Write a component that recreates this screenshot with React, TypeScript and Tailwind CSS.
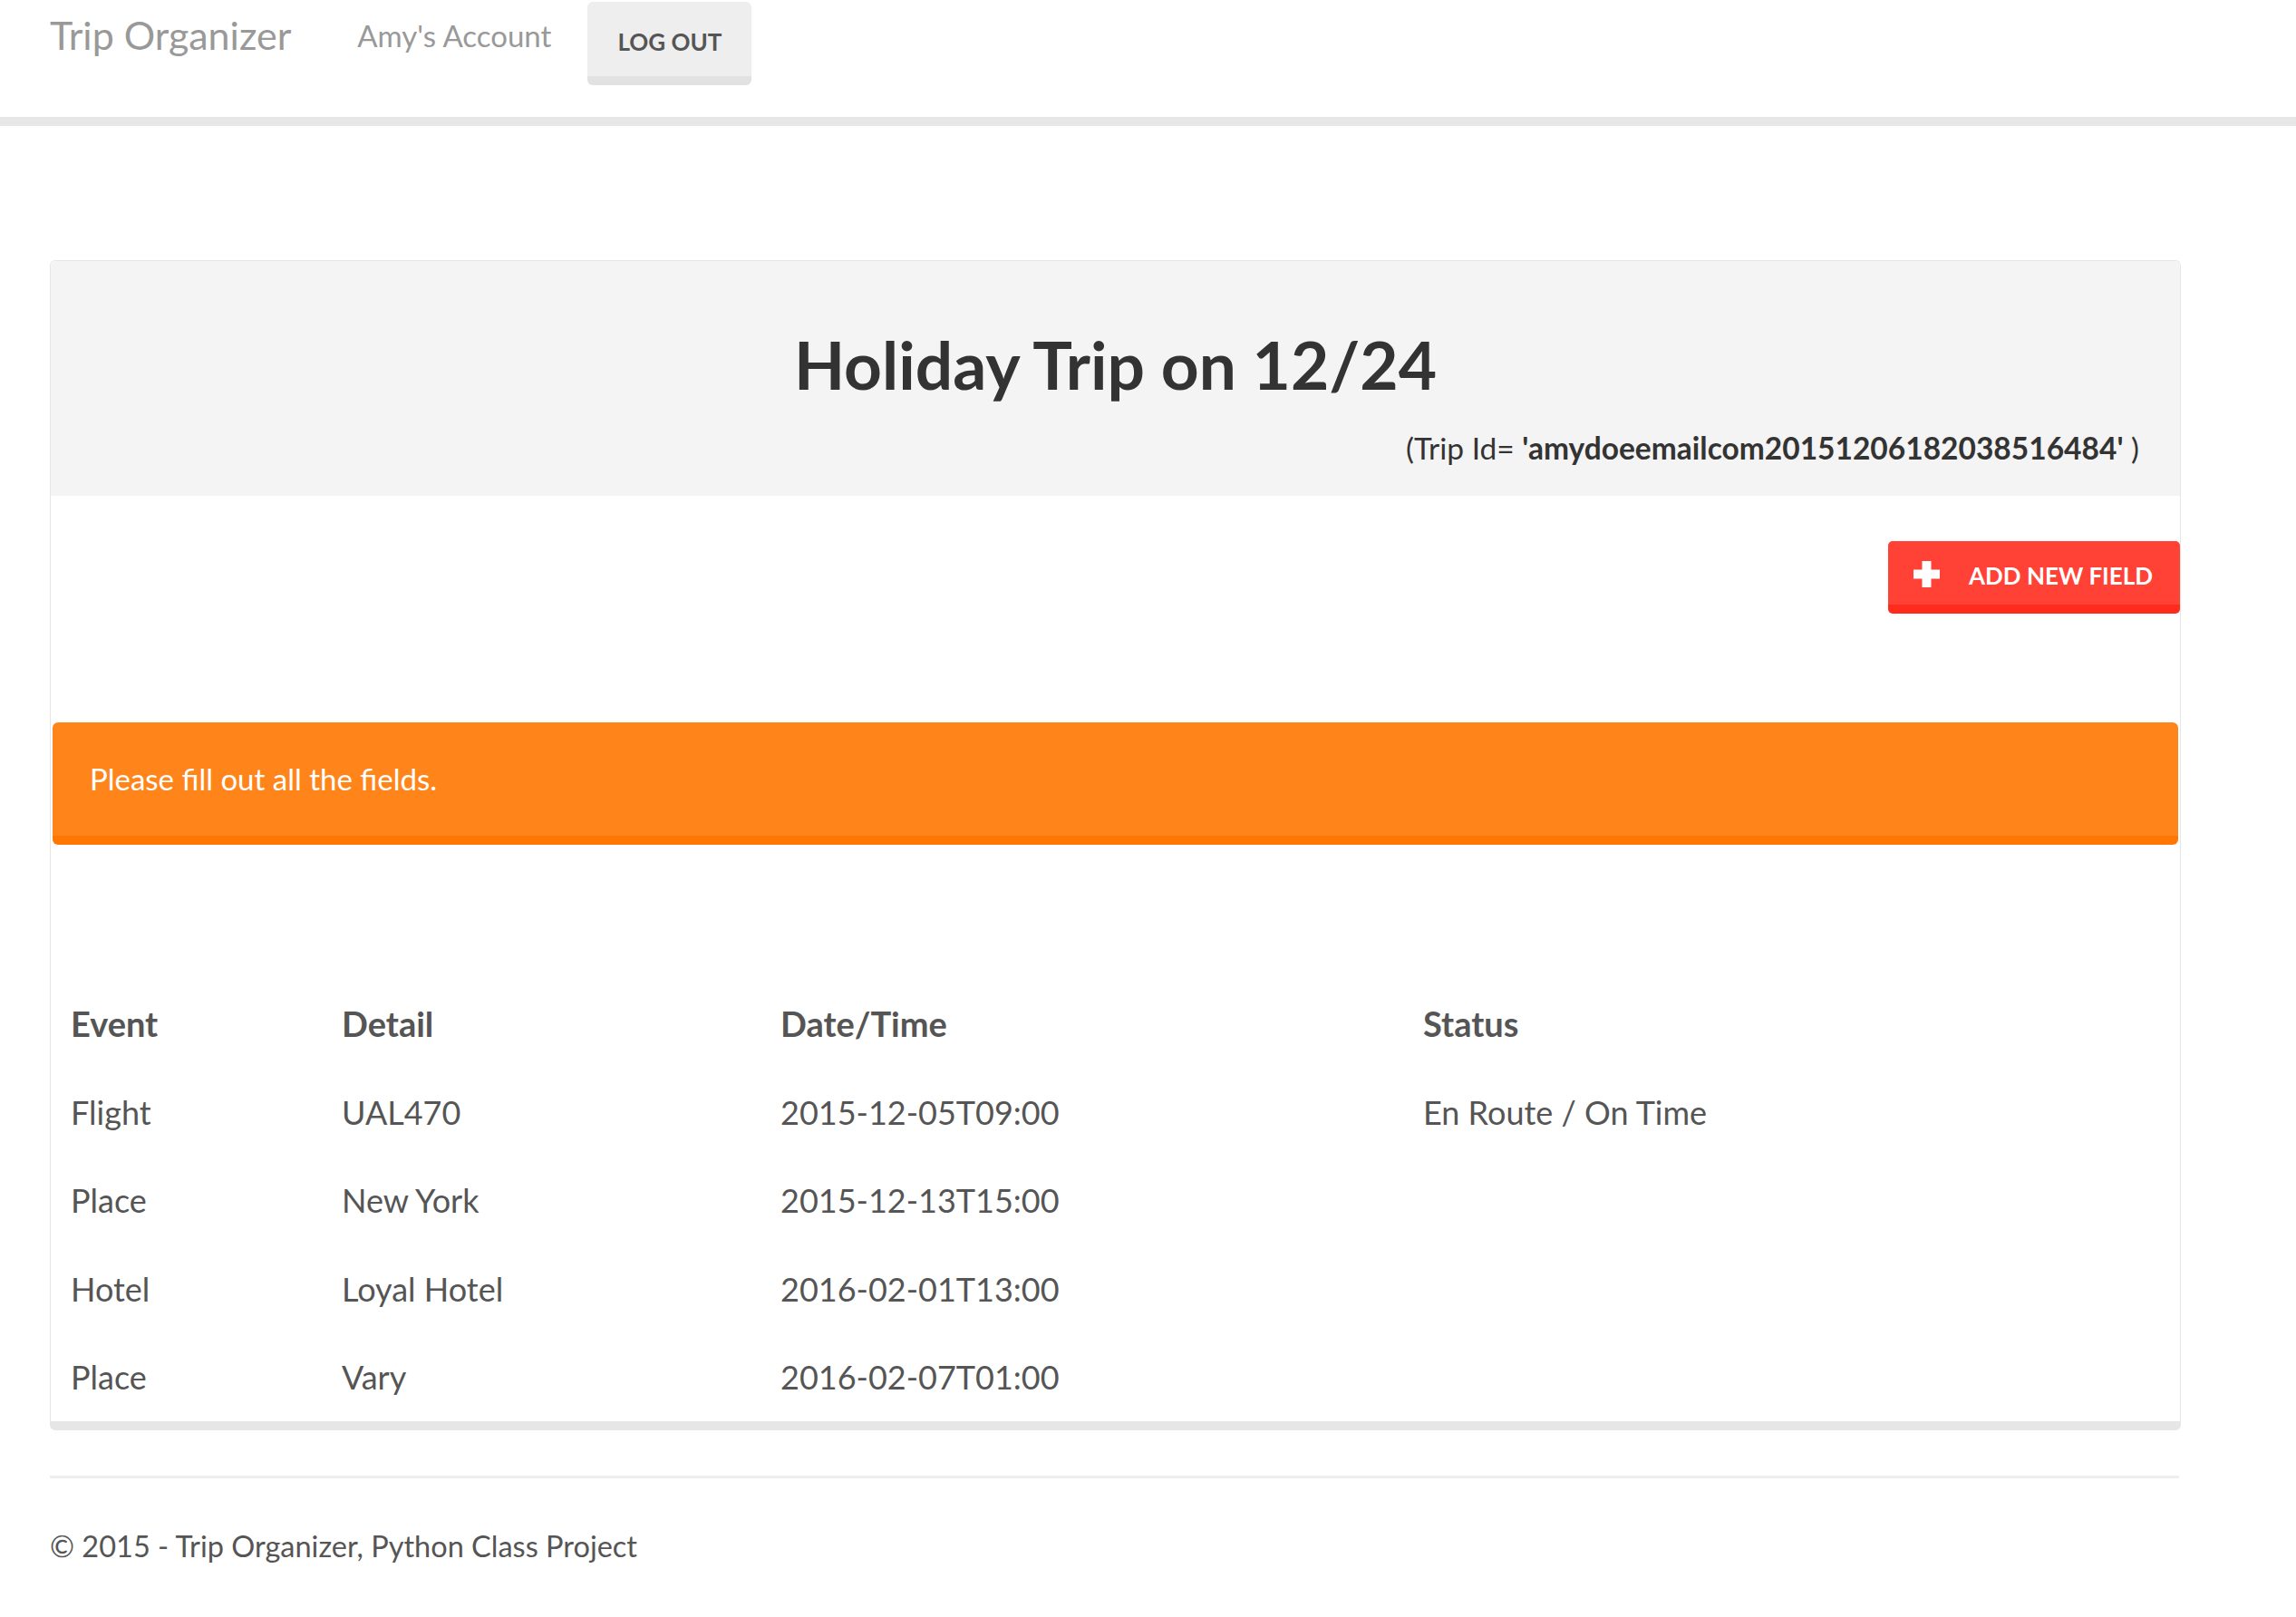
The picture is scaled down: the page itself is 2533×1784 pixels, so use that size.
import React from "react";

// Trip page: navbar, trip panel with alert + event table, footer.

const FONT = "font-['Source_Sans_Pro','Lato','Liberation_Sans',sans-serif]";

type Row = { event: string; detail: string; when: string; status?: string };

const ROWS: Row[] = [
  { event: "Flight", detail: "UAL470", when: "2015-12-05T09:00", status: "En Route / On Time" },
  { event: "Place", detail: "New York", when: "2015-12-13T15:00" },
  { event: "Hotel", detail: "Loyal Hotel", when: "2016-02-01T13:00" },
  { event: "Place", detail: "Vary", when: "2016-02-07T01:00" },
];

function PlusIcon() {
  return (
    <svg width="29" height="29" viewBox="0 0 29 29" className="shrink-0">
      <rect x="9.5" y="0" width="10" height="29" fill="#fff" />
      <rect x="0" y="9.5" width="29" height="10" fill="#fff" />
    </svg>
  );
}

function Navbar() {
  return (
    <div className="h-[139px] border-b-[10px] border-[#e7e7e7] bg-white">
      <div className="flex items-start pl-[55px]">
        <div className="pt-[17px] text-[43px] leading-none text-[#999]">Trip Organizer</div>
        <div className="ml-[73px] pt-[23px] text-[33px] leading-none text-[#999]">Amy's Account</div>
        <button className="ml-[40px] mt-[2px] h-[92px] w-[181px] rounded-[6px] border-b-[10px] border-[#e2e2e2] bg-[#eeeeee] pt-[6px] text-[26px] font-bold leading-none text-[#555]">
          LOG OUT
        </button>
      </div>
    </div>
  );
}

function TripPanel() {
  return (
    <div className="mx-[55px] mt-[148px] w-[2351px] rounded-[6px] border border-b-[10px] border-[#e6e6e6] bg-white">
      <div className="rounded-t-[6px] bg-[#f4f4f4] px-[45px] pt-[78px] pb-[35px]">
        <h1 className="text-center text-[73px] font-bold leading-none text-[#333]">Holiday Trip on 12/24</h1>
        <p className="mt-[39px] text-right text-[33.5px] leading-none text-[#333]">
          (Trip Id= <span className="font-bold">'amydoeemailcom20151206182038516484'</span> )
        </p>
      </div>

      <div className="flex justify-end pt-[50px]">
        <button className="flex h-[80px] w-[322px] items-start gap-[32px] rounded-[5px] border-b-[10px] border-[#ff2b1c] bg-[#ff4136] pl-[28px] pt-[22px]">
          <PlusIcon />
          <span className="pt-[3px] text-[26px] font-bold leading-none text-white">ADD NEW FIELD</span>
        </button>
      </div>

      <div className="mx-[2px] mt-[120px] h-[135px] rounded-[6px] border-b-[10px] border-[#ff7702] bg-[#ff851b] pl-[41px] pt-[46px] text-[33px] leading-none text-white">
        Please fill out all the fields.
      </div>

      <div className="mt-[149px] text-[36px] leading-none text-[#555]">
        <div className="grid h-[97.5px] grid-cols-[299px_484px_709px_1fr] items-center text-[38px] font-bold">
          <div className="pl-[22px]">Event</div>
          <div className="pl-[22px]">Detail</div>
          <div className="pl-[22px]">Date/Time</div>
          <div className="pl-[22px]">Status</div>
        </div>
        {ROWS.map((r, i) => (
          <div key={i} className="grid h-[97.5px] grid-cols-[299px_484px_709px_1fr] items-center">
            <div className="pl-[22px]">{r.event}</div>
            <div className="pl-[22px]">{r.detail}</div>
            <div className="pl-[22px]">{r.when}</div>
            <div className="pl-[22px]">{r.status ?? ""}</div>
          </div>
        ))}
      </div>
    </div>
  );
}

export default function App() {
  return (
    <div className={`${FONT} min-h-[1784px] w-[2533px] bg-white`}>
      <Navbar />
      <TripPanel />
      <div className="mx-[55px] mt-[50px] w-[2349px] border-t-[3px] border-[#eeeeee]" />
      <div className="pl-[55px] pt-[59px] text-[32.5px] leading-none text-[#555]">
        © 2015 - Trip Organizer, Python Class Project
      </div>
    </div>
  );
}
